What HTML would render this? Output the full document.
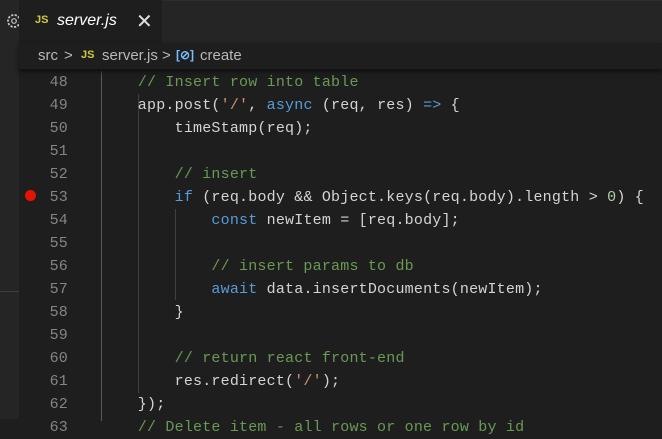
<!DOCTYPE html>
<html><head><style>
*{margin:0;padding:0;box-sizing:border-box}
html,body{width:662px;height:419px}
body{background:#1e1e1e;position:relative;overflow:hidden;font-family:"Liberation Sans",sans-serif}
.side{position:absolute;left:0;top:0;width:19px;height:419px;background:#252526}
.side .ln{position:absolute;left:0;top:291px;width:19px;height:1px;background:#3c3c3c}
.tabbar{position:absolute;left:19px;top:0;width:643px;height:43px;background:#252526;border-top:1px solid #2d2d2d}
.tab{position:absolute;left:19px;top:0;width:143px;height:43px;background:#1e1e1e}
.js{color:#cbcb41;font-weight:bold;font-size:11px;position:absolute}
.crumb{position:absolute;left:19px;top:43px;width:643px;height:26px;background:#1e1e1e;box-shadow:0 3px 4px #111;z-index:2;color:#b8b8b8;font-size:15px}
.code{position:absolute;left:19px;top:71px;width:643px;height:350px}
.l{position:absolute;left:0;height:23px;width:643px;font-family:"Liberation Mono",monospace;font-size:15px;letter-spacing:0.2px;color:#d4d4d4;white-space:pre;line-height:23px}
.n{position:absolute;width:49px;text-align:right;color:#858585}
.t{position:absolute;left:82px}
.k{color:#569cd6}.c{color:#6a9955}.s{color:#ce9178}.m{color:#b5cea8}
.g{position:absolute;width:1px;background:#404040}
</style></head><body>
<div class="side"><div class="ln"></div>
<svg style="position:absolute;left:5px;top:12px" width="16" height="18" viewBox="0 0 16 18"><circle cx="9" cy="9" r="6" fill="none" stroke="#c5c5c5" stroke-width="1.8" stroke-dasharray="2.2 1.4"/><circle cx="9" cy="9" r="2.3" fill="none" stroke="#c5c5c5" stroke-width="1.2"/></svg>
</div>
<div class="tabbar"></div>
<div class="tab">
<span class="js" style="left:16px;top:14px">JS</span>
<span style="position:absolute;left:38px;top:12px;color:#fff;font-style:italic;font-size:16px">server.js</span>
<span style="position:absolute;left:117px;top:9px;color:#e0e0e0;font-size:20px">✕</span>
</div>
<div class="crumb">
<span style="position:absolute;left:19px;top:4px">src</span>
<span style="position:absolute;left:45px;top:4px;font-size:15px">&gt;</span>
<span class="js" style="left:62px;top:6px">JS</span>
<span style="position:absolute;left:83px;top:4px">server.js</span>
<span style="position:absolute;left:143px;top:4px;font-size:15px">&gt;</span>
<span style="position:absolute;left:157px;top:5px;color:#75beff;font-size:12px;font-weight:bold">[⊘]</span>
<span style="position:absolute;left:181px;top:4px">create</span>
</div>
<div class="code">
<div class="g" style="left:82px;top:0;height:350px;background:#5a5a5a"></div>
<div class="g" style="left:119px;top:23px;height:299px"></div>
<div class="g" style="left:156px;top:138px;height:91px"></div>
<div style="position:absolute;left:6px;top:119px;width:11px;height:11px;border-radius:50%;background:#e51400"></div>
<div class="l" style="top:0"><span class="n">48</span><span class="t">    <span class="c">// Insert row into table</span></span></div>
<div class="l" style="top:23px"><span class="n">49</span><span class="t">    app.post(<span class="s">'/'</span>, <span class="k">async</span> (req, res) <span class="k">=&gt;</span> {</span></div>
<div class="l" style="top:46px"><span class="n">50</span><span class="t">        timeStamp(req);</span></div>
<div class="l" style="top:69px"><span class="n">51</span></div>
<div class="l" style="top:92px"><span class="n">52</span><span class="t">        <span class="c">// insert</span></span></div>
<div class="l" style="top:115px"><span class="n">53</span><span class="t">        <span class="k">if</span> (req.body &amp;&amp; Object.keys(req.body).length &gt; <span class="m">0</span>) {</span></div>
<div class="l" style="top:138px"><span class="n">54</span><span class="t">            <span class="k">const</span> newItem = [req.body];</span></div>
<div class="l" style="top:161px"><span class="n">55</span></div>
<div class="l" style="top:184px"><span class="n">56</span><span class="t">            <span class="c">// insert params to db</span></span></div>
<div class="l" style="top:207px"><span class="n">57</span><span class="t">            <span class="k">await</span> data.insertDocuments(newItem);</span></div>
<div class="l" style="top:230px"><span class="n">58</span><span class="t">        }</span></div>
<div class="l" style="top:253px"><span class="n">59</span></div>
<div class="l" style="top:276px"><span class="n">60</span><span class="t">        <span class="c">// return react front-end</span></span></div>
<div class="l" style="top:299px"><span class="n">61</span><span class="t">        res.redirect(<span class="s">'/'</span>);</span></div>
<div class="l" style="top:322px"><span class="n">62</span><span class="t">    });</span></div>
<div class="l" style="top:345px"><span class="n">63</span><span class="t">    <span class="c">// Delete item - all rows or one row by id</span></span></div>
</div>
</body></html>
